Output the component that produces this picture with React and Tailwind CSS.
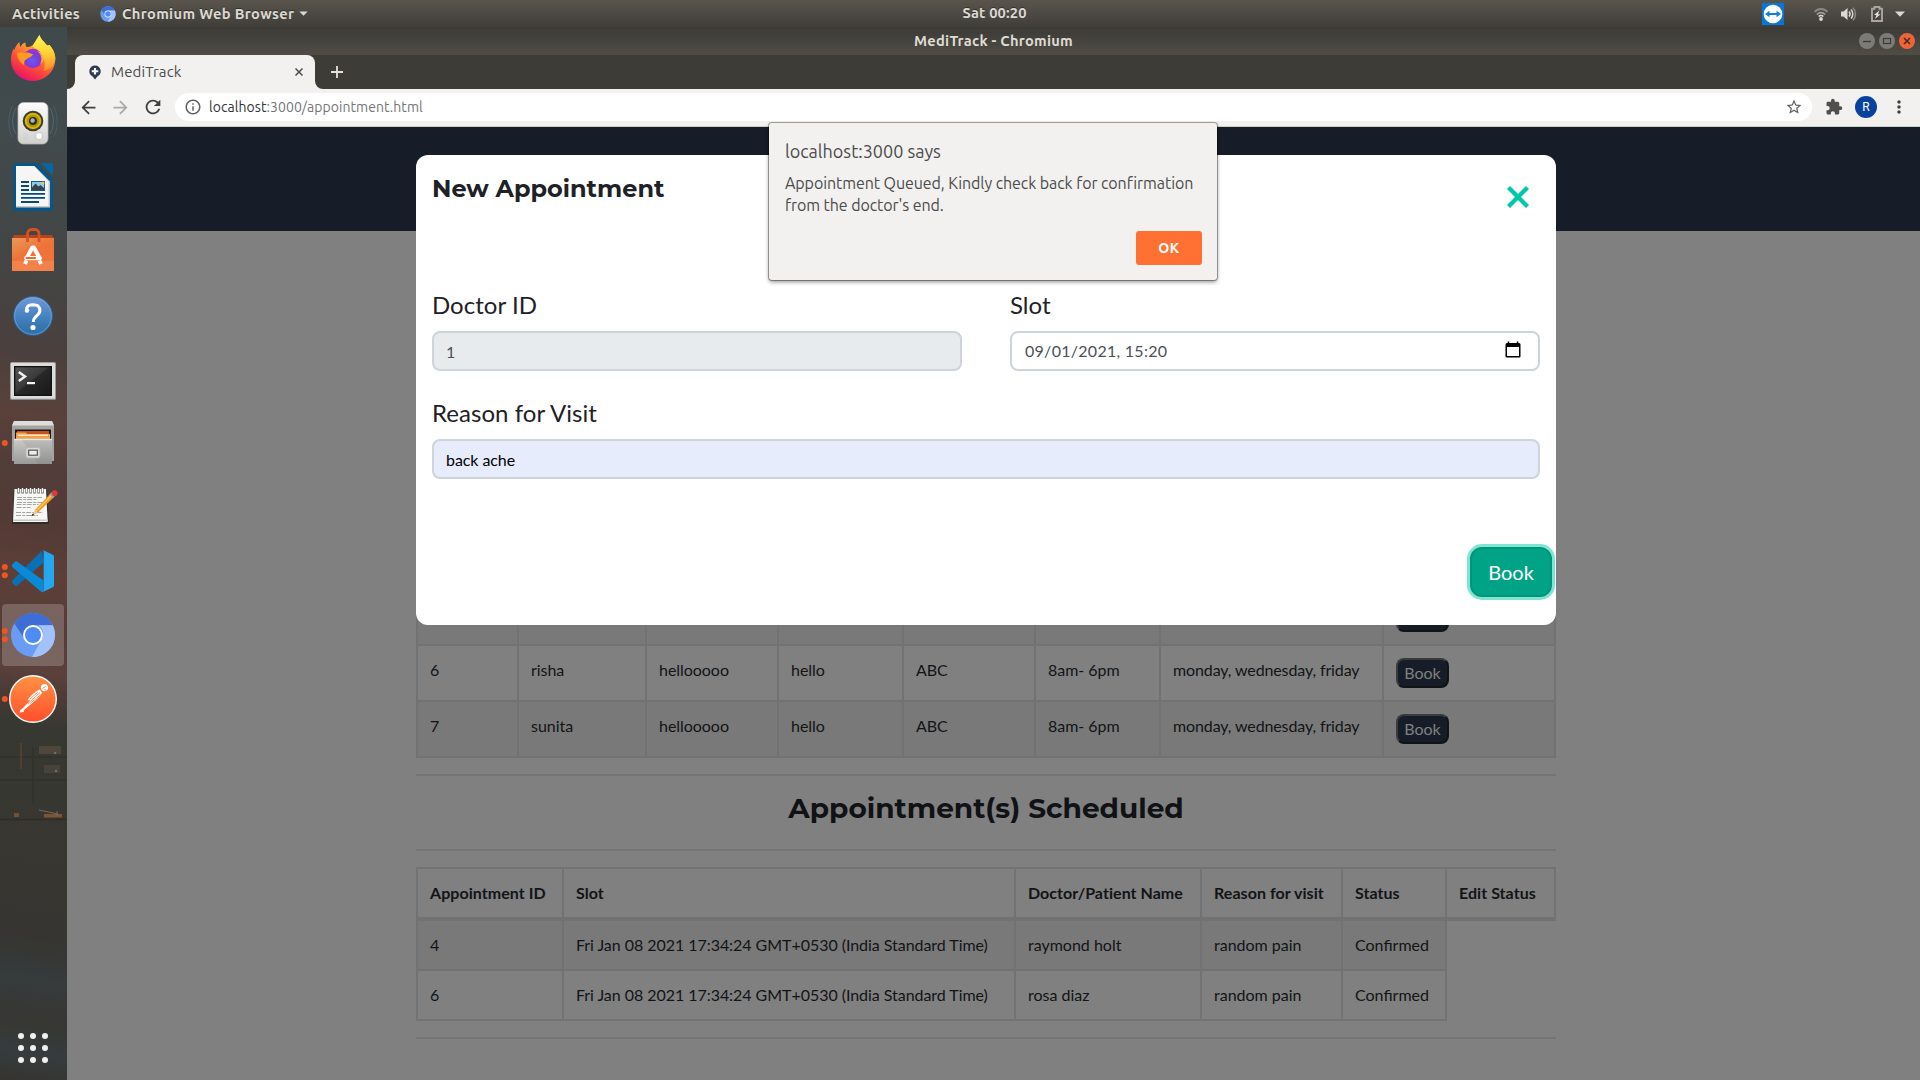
import {
  MdArrowBack,
  MdArrowForward,
  MdRefresh,
  MdInfoOutline,
  MdStarBorder,
  MdExtension,
  MdMoreVert,
} from "react-icons/md";

const UBUNTU = "font-['Ubuntu','Noto_Sans',sans-serif]";
const LATO = "font-['Lato','Noto_Sans',sans-serif]";
const MONTSERRAT = "font-['Montserrat','Noto_Sans',sans-serif]";

/* ---------- dock icons, each drawn in a 67x64 slot ---------- */

function Slot({ children, dots = 0, active = false }) {
  return (
    <div className="relative h-16 w-[67px] shrink-0">
      <svg viewBox="0 0 67 64" className="block h-16 w-[67px]">
        {active && <rect x="2" y="1" width="62" height="62" rx="4" fill="#fff" fillOpacity="0.2" />}
        {children}
        {dots === 1 && <circle cx="4.8" cy="32" r="3" fill="#ef5423" />}
        {dots === 2 && (
          <>
            <circle cx="4.8" cy="28" r="3" fill="#ef5423" />
            <circle cx="4.8" cy="36.3" r="3" fill="#ef5423" />
          </>
        )}
      </svg>
    </div>
  );
}

function Firefox() {
  return (
    <>
      <defs>
        <linearGradient id="ff1" x1="0.8" y1="0.05" x2="0.3" y2="1">
          <stop offset="0" stopColor="#ffe94a" />
          <stop offset="0.3" stopColor="#ffa42a" />
          <stop offset="0.6" stopColor="#ff5538" />
          <stop offset="0.85" stopColor="#f22a50" />
          <stop offset="1" stopColor="#e0107e" />
        </linearGradient>
        <linearGradient id="ff2" x1="0.5" y1="0" x2="0.6" y2="1">
          <stop offset="0" stopColor="#fff44f" />
          <stop offset="0.5" stopColor="#ffd335" />
          <stop offset="1" stopColor="#ff8a2c" />
        </linearGradient>
        <radialGradient id="ff3" cx="0.45" cy="0.6" r="0.7">
          <stop offset="0" stopColor="#6a5be8" />
          <stop offset="0.5" stopColor="#7a3ddc" />
          <stop offset="1" stopColor="#b02ad4" />
        </radialGradient>
      </defs>
      <path
        d="M19.5 15 C19.5 17 19.8 18.5 20.5 20 C21.5 17.5 23.5 15.5 25.7 15.7 C25.3 17 25.6 18.6 26.5 20 C30 20.5 33 18 35 16 C36 12.5 38 10 39.5 8 C40.8 12.5 44 14.5 47 18.5 L49.5 18 C53 22 55.5 27 55.3 32 C55 44.5 45 54 33 54 C20.5 54 11 44.5 11 32.5 C11 27.5 12.2 24.5 13.8 21.5 L14.5 23 C15 20 17 17 19.5 15 Z"
        fill="url(#ff1)"
      />
      <path
        d="M32.500 19.500 C34 15 38 12 39.5 8 C40.8 12.5 44 14.5 47 18.5 L49.5 18 C53 22 55.5 27 55.3 32 C54.5 38 50 43 43.5 44 C46 38 46 27 32.500 19.500 Z"
        fill="url(#ff2)"
      />
      <circle cx="33" cy="31.5" r="9.7" fill="url(#ff3)" />
      <path
        d="M17 26 C20 24.5 24 26.5 26 25.8 C28 25 30 26.5 33 27.2 C32 30 27.5 30.5 26.5 32.5 C24 33 24 36 24 38 C19 35 17 30 17 26 Z"
        fill="#ff9a1f"
      />
      <path d="M37 24 C42 27 42.5 33 40 37.5 C46 33 44.5 25.5 37 24 Z" fill="#ffb52b" />
    </>
  );
}

function Speaker() {
  return (
    <>
      <defs>
        <linearGradient id="sp1" x1="0" y1="0" x2="0" y2="1">
          <stop offset="0" stopColor="#fdfdfd" />
          <stop offset="1" stopColor="#cfcfcd" />
        </linearGradient>
      </defs>
      <g fill="none" stroke="#5d7d9c" strokeOpacity="0.6">
        <path d="M16 17 C11.5 25 11.5 36 16 43" />
        <path d="M50 17 C54.5 25 54.5 36 50 43" />
        <path d="M12.5 15 C7.5 25 7.5 37 12.5 46" strokeOpacity="0.35" />
        <path d="M53.5 15 C58.5 25 58.5 37 53.5 46" strokeOpacity="0.35" />
      </g>
      <rect x="18" y="11.5" width="30" height="41.5" rx="5.5" fill="url(#sp1)" stroke="#b5b5b2" strokeWidth="0.8" />
      <circle cx="33" cy="30" r="10.3" fill="#3b3a36" />
      <circle cx="33" cy="30" r="8.3" fill="#d9b800" />
      <circle cx="33" cy="30" r="6.3" fill="#b39700" />
      <circle cx="33" cy="30" r="4" fill="#2e2e2e" />
      <circle cx="32.6" cy="29.5" r="2.2" fill="#a9b3bd" />
      <path d="M36 42 h6 v5 a4 4 0 0 1 -6 0 z" fill="#fff" stroke="#bbb" strokeWidth="0.6" />
      <rect x="24" y="43" width="3.5" height="5" rx="1" fill="none" stroke="#c9c9c9" strokeWidth="0.6" />
    </>
  );
}

function Writer() {
  return (
    <>
      <path d="M15 8.3 H37 L53 24.5 V54 a2 2 0 0 1 -2 2 H15 a2 2 0 0 1 -2 -2 V10.3 a2 2 0 0 1 2 -2 Z" fill="#07568a" />
      <path d="M16 11 H34.5 L50 26.500 V52.5 H16 Z" fill="#c9c9c8" />
      <path d="M16 11 H34 L48.500 26.500 V51 H16 Z" fill="#f6f6f5" />
      <path d="M41 8.300 H51.500 a1.500 1.500 0 0 1 1.500 1.500 V20.500 Z" fill="#0468a8" />
      <g stroke="#0b4a77" strokeWidth="1.9">
        <path d="M21 27 h8 M21 31 h8 M21 35 h8 M21 38.9 h24 M21 42.9 h24 M21 47 h18" />
      </g>
      <rect x="31" y="26" width="14" height="10" fill="#0f5d92" />
      <rect x="32" y="27" width="12" height="8" fill="#8fcbf0" />
      <path d="M32 35 V32.500 L35.5 28.5 L38.5 31.5 L40.5 30 L44 33 V35 Z" fill="#3a4246" />
      <circle cx="43" cy="28" r="1.5" fill="#f1c84b" />
    </>
  );
}

function Software() {
  return (
    <>
      <defs>
        <linearGradient id="sw1" x1="0" y1="0" x2="0.6" y2="1">
          <stop offset="0" stopColor="#e89a5c" />
          <stop offset="0.5" stopColor="#ef7337" />
          <stop offset="1" stopColor="#f0743c" />
        </linearGradient>
      </defs>
      <path d="M12 20 L14 16 H52 L54 20 Z" fill="#b8431a" />
      <rect x="12" y="19" width="42" height="33" fill="url(#sw1)" />
      <rect x="12" y="42" width="42" height="10" fill="#f58b55" fillOpacity="0.6" />
      <path d="M27.5 23 V14.5 a4 4 0 0 1 4 -4 h3.5 a4 4 0 0 1 4 4 V23" fill="none" stroke="#d9501f" strokeWidth="2.8" />
      <path d="M27.300 38 L32.3 28.5 h1.6 L39 38" fill="none" stroke="#fff" strokeWidth="4" strokeLinejoin="round" />
      <path d="M25 45 l1.5 -3.500 M41 45 l-1.5 -3.500" stroke="#fff" strokeWidth="3.8" />
      <rect x="24" y="37" width="18" height="4.2" rx="2.1" fill="#fff" />
      <rect x="25.5" y="38.1" width="10.5" height="2" rx="0.8" fill="#ef6b2c" />
    </>
  );
}

function Help() {
  return (
    <>
      <defs>
        <linearGradient id="hp1" x1="0" y1="0" x2="0" y2="1">
          <stop offset="0" stopColor="#7099d6" />
          <stop offset="0.55" stopColor="#4380c0" />
          <stop offset="1" stopColor="#2d6c9f" />
        </linearGradient>
      </defs>
      <circle cx="33" cy="33" r="19.5" fill="url(#hp1)" stroke="#2b6192" strokeWidth="1" />
      <circle cx="33" cy="33" r="18.3" fill="none" stroke="#86abdc" strokeOpacity="0.7" strokeWidth="0.9" />
      <path
        d="M26.8 28.5 C25.5 22.5 30 21.7 33.5 21.7 C41 22 41 28.5 38 31.5 C35.5 34 33.3 35 33.3 39"
        fill="none"
        stroke="#fff"
        strokeWidth="3"
      />
      <circle cx="27" cy="27.5" r="2.2" fill="#fff" />
      <circle cx="33" cy="44.5" r="2.6" fill="#fff" />
    </>
  );
}

function Terminal() {
  return (
    <>
      <defs>
        <linearGradient id="tm1" x1="0" y1="0" x2="1" y2="1">
          <stop offset="0" stopColor="#555" />
          <stop offset="0.45" stopColor="#3a3a3a" />
          <stop offset="0.5" stopColor="#272727" />
          <stop offset="1" stopColor="#1a1a1a" />
        </linearGradient>
      </defs>
      <rect x="10" y="15" width="46" height="38" rx="1.5" fill="#8b8b89" />
      <rect x="10.8" y="15.8" width="44.4" height="36" rx="1" fill="#dcdcda" />
      <rect x="14" y="19" width="38" height="30" fill="#111" />
      <rect x="15.3" y="20.3" width="35.4" height="27.4" fill="url(#tm1)" />
      <path d="M18.8 25 L25 29.5 L18.8 34" fill="none" stroke="#f0f0ee" strokeWidth="2.5" />
      <rect x="27" y="35" width="8" height="2.2" fill="#f4f4f2" />
    </>
  );
}

function Files() {
  return (
    <>
      <defs>
        <linearGradient id="fl1" x1="0" y1="0" x2="0" y2="1">
          <stop offset="0" stopColor="#c9c9c8" />
          <stop offset="1" stopColor="#9a9a99" />
        </linearGradient>
      </defs>
      <path d="M14 10 H52 L54 15 V50 H12 V15 Z" fill="#a3a3a2" />
      <path d="M14 10 H52 L54 14.5 H12 Z" fill="#dededd" />
      <rect x="15" y="18.5" width="36" height="10" fill="#191919" />
      <path d="M17 20 h32 v8 h-32 z" fill="#c4501c" />
      <path d="M16 21.5 h10 l1 1.5 h23 v6 h-34 z" fill="#f0a24a" />
      <path d="M18 24.2 h30" stroke="#fff4e2" strokeWidth="1.2" />
      <path d="M14 28.5 H52 V53 H14 Z" fill="url(#fl1)" />
      <path d="M14 28.5 H52" stroke="#e6e6e6" strokeWidth="1.4" />
      <path d="M22 29 H52 V53 H38 Z" fill="#000" fillOpacity="0.06" />
      <rect x="26" y="36.5" width="14" height="10.5" rx="2" fill="#d8d8d7" stroke="#b5b5b4" strokeWidth="0.8" />
      <rect x="28.7" y="39.2" width="8.6" height="5" fill="#efefef" stroke="#555" strokeWidth="1.2" />
    </>
  );
}

const RINGS = [18.5, 22.5, 26.5, 30.5, 34.5, 38.5, 42.5];

function Notes() {
  return (
    <>
      <path d="M14 15 H47 L49 49 H12 Z" fill="#2f2b28" />
      <path d="M14.5 14 H46 L47.7 47 H13 Z" fill="#f7f7f5" />
      <path d="M13 45.3 H48" stroke="#c9cac2" strokeWidth="1.6" />
      <g stroke="#9b9b9b" strokeWidth="0.9" strokeDasharray="5 1.2 3 1">
        <path d="M17 22.5 h25 M17 24.5 h20 M17 27.5 h26 M16.5 29.5 h22 M16.5 32.5 h14 M16 37.5 h27 M16 40.5 h22" />
      </g>
      <g stroke="#6f6f6f" strokeWidth="2.6">
        {RINGS.map((x) => (
          <path key={x} d={`M${x} 13.5 v5`} />
        ))}
      </g>
      <g stroke="#fff" strokeWidth="1.2">
        {RINGS.map((x) => (
          <path key={x} d={`M${x} 13 v4.5`} />
        ))}
      </g>
      <path d="M35 35 L50.5 18.5 L54 22 L37.5 38 Z" fill="#f09c2b" />
      <path d="M36.2 36.2 L52 20" stroke="#ffc65c" strokeWidth="1.2" />
      <path d="M35 35 L37.5 38 L31.5 41 Z" fill="#e8c79a" />
      <path d="M33 38.5 L31 41.3 L34 40 Z" fill="#111" />
      <path d="M49.3 19.5 L52 17 L55.5 20.5 L53 23 Z" fill="#9fa3a6" />
      <circle cx="54.6" cy="18.2" r="2.9" fill="#e03a3c" />
    </>
  );
}

function Code() {
  return (
    <>
      <path d="M12.3 41.500 L42 11.5 L43.5 23.5 L17 46.7 Q16 47.3 15 46.5 L12.300 44 Q11.500 42.800 12.300 41.500 Z" fill="#0a70b5" />
      <path d="M12.3 25.5 L15 22.7 Q16 22 17.3 22.8 L43.5 41.5 V53 Q42 53.6 40.5 52.3 L12.3 28 Q11.5 26.8 12.3 25.5 Z" fill="#0a8ad6" />
      <path d="M42.8 11 L52.8 15.7 Q54 16.3 54 17.6 V46.5 Q54 47.7 52.8 48.3 L42.8 53 Q43.7 52.5 43.7 51 V13 Q43.7 11.5 42.8 11 Z" fill="#25a7f0" />
    </>
  );
}

function ChromiumMark() {
  return (
    <>
      <circle cx="33" cy="32" r="22" fill="#6a9cf5" />
      <path d="M14.3 20.5 A22 22 0 0 1 52.7 22.2 H33 A10 10 0 0 0 24 35 Z" fill="#3f6dd6" />
      <path d="M52.7 22.2 A22 22 0 0 1 32 54 L42 36 A10 10 0 0 0 38 22.2 Z" fill="#a3c2fa" />
      <circle cx="33" cy="32" r="10" fill="#fff" />
      <circle cx="33" cy="32" r="8" fill="#4f8bf5" />
    </>
  );
}

function Postman() {
  return (
    <>
      <defs>
        <linearGradient id="pm1" x1="0" y1="0" x2="0" y2="1">
          <stop offset="0" stopColor="#ff9144" />
          <stop offset="1" stopColor="#ff4f2b" />
        </linearGradient>
      </defs>
      <circle cx="33" cy="32" r="24" fill="#fff" />
      <circle cx="33" cy="32" r="22.6" fill="url(#pm1)" />
      <circle cx="44.5" cy="20.6" r="3.6" fill="#fff" />
      <path d="M42.5 21.5 l3 -2 M44.5 22 l3 3" stroke="#f9793c" strokeWidth="0.9" />
      <path d="M39.5 22.5 C35 24.5 30 29.5 27.5 33 L30 33.5 L24 40 L20 43.5 L19.5 45.5 L23.5 45 L24 43 L33 35.5 C37 32.5 41 28.5 42 25.5 Z" fill="#fff" />
      <path d="M40 25.5 L27.5 37 M41 27.5 L30 36.5 M37.5 25.5 L29.5 32.5" stroke="#fb7a40" strokeWidth="0.8" />
    </>
  );
}

function Dock() {
  return (
    <aside className="flex w-[67px] shrink-0 flex-col justify-between bg-[linear-gradient(190deg,#3f4a4d_0%,#414a4c_11%,#424748_18%,#454443_25%,#4a403e_31%,#5a413a_37%,#513d39_42%,#523a35_47%,#5d3f38_52%,#563c37_57%,#5b403b_61%,#473a35_64%,#383832_66%,#373731_72%,#383631_80%,#363531_86%,#363b3c_90%,#373733_94%,#363c3d_97%,#35342f_100%)]">
      <div className="flex flex-col">
        <Slot><Firefox /></Slot>
        <Slot><Speaker /></Slot>
        <Slot><Writer /></Slot>
        <Slot><Software /></Slot>
        <Slot><Help /></Slot>
        <Slot><Terminal /></Slot>
        <Slot dots={1}><Files /></Slot>
        <Slot><Notes /></Slot>
        <Slot dots={2}><Code /></Slot>
        <Slot dots={2} active><ChromiumMark /></Slot>
        <Slot dots={1}><Postman /></Slot>
      </div>
      <svg viewBox="0 0 67 60" className="mt-3 mb-auto h-[60px] w-[67px]" opacity="0.45">
        <path d="M0 14 H67 M0 37 H67 M33 4 V60" stroke="#2a2b27" strokeWidth="1.500" />
        <path d="M21 0 V26" stroke="#6d4b35" strokeWidth="2" />
        <rect x="39" y="3" width="22" height="8" fill="#6a5848" />
        <rect x="44" y="22" width="16" height="8" fill="#5c5046" />
        <circle cx="55" cy="10" r="1.200" fill="#b7b3a8" />
        <circle cx="56" cy="28" r="1.200" fill="#b7b3a8" />
      </svg>
      <svg viewBox="0 0 67 14" className="mb-[210px] h-3.5 w-[67px]" opacity="0.7">
        <path d="M0 10.500 H67" stroke="#2a2b27" strokeWidth="1.500" />
        <rect x="14" y="4" width="5" height="4" fill="#8a5b38" />
        <rect x="44" y="5" width="18" height="3.500" fill="#9a6233" />
        <path d="M39 1 L58 5 M57 2 V7" stroke="#8d7f70" strokeWidth="1" />
      </svg>
      <div className="grid w-fit grid-cols-3 gap-1.5 pb-[17px] pl-[18px]">
        {Array.from({ length: 9 }, (_, i) => (
          <span key={i} className="size-1.5 rounded-full bg-[#f0f0ee]" />
        ))}
      </div>
    </aside>
  );
}

/* ---------- desktop bars ---------- */

function TopBar() {
  return (
    <header className={`${UBUNTU} grid h-[27px] grid-cols-[1fr_auto_1fr] items-center bg-gradient-to-b from-[#59554c] to-[#403e39] text-[14.67px] leading-[27px] font-bold text-[#dcd9d3] [text-shadow:0_-1px_0_#00000066]`}>
      <div className="flex items-center pl-3 tracking-[0.28px]">
        <span>Activities</span>
        <svg viewBox="10 9 46 46" className="ml-5 size-[16px]">
          <ChromiumMark />
        </svg>
        <span className="ml-1.5 tracking-[0.35px]">Chromium Web Browser</span>
        <svg viewBox="0 0 10 6" className="ml-[5px] h-[5px] w-[9px]">
          <path d="M0 0.5 H10 L5 5.8 Z" fill="#dcd9d3" />
        </svg>
      </div>
      <span className="-mt-0.5 ml-[69px] tracking-[0.15px]">Sat 00:20</span>
      <div className="flex items-center justify-end pr-[15px]">
        <svg viewBox="0 0 22 22" className="size-[22px]">
          <rect width="22" height="22" fill="#0a77d8" />
          <circle cx="11" cy="11" r="9.3" fill="#fff" />
          <path d="M3 11 L7.5 7.8 V10 H14.5 V7.8 L19 11 L14.5 14.2 V12 H7.5 V14.2 Z" fill="#0f7fdd" />
        </svg>
        <svg viewBox="0 0 14 14" className="ml-[30px] h-3.5 w-3.5" fill="none">
          <path d="M0.6 5 C4 1 10 1 13.4 5" stroke="#8b8882" strokeWidth="1.8" />
          <path d="M2.8 7.5 C5 5 9 5 11.2 7.5" stroke="#9f9c96" strokeWidth="1.6" />
          <path d="M4.6 9.6 C6 8 8 8 9.4 9.6" stroke="#dcd9d3" strokeWidth="1.5" />
          <circle cx="7" cy="12" r="1.9" fill="#dcd9d3" />
        </svg>
        <svg viewBox="0 0 16 14" className="ml-[13px] h-3.5 w-4" fill="none">
          <path d="M0 4.5 H2.5 L6.5 1 V13 L2.5 9.5 H0 Z" fill="#dcd9d3" />
          <path d="M8 4.5 C9.3 6 9.3 8 8 9.5" stroke="#dcd9d3" strokeWidth="1.5" />
          <path d="M10 2.5 C12.4 5 12.4 9 10 11.5" stroke="#dcd9d3" strokeWidth="1.5" />
          <path d="M12 0.7 C15.3 4 15.3 10 12 13.3" stroke="#8b8882" strokeWidth="1.5" />
        </svg>
        <svg viewBox="0 0 12 16" className="ml-3.5 h-4 w-3">
          <path d="M3.5 1 H8.5 V2.8 H11 V15 H1 V2.8 H3.5 Z" fill="none" stroke="#a9a6a0" strokeWidth="1.9" />
          <path d="M8.5 4.3 L3 9 H5.5 L4 13 L9.5 8.2 H7 Z" fill="#e4e1db" />
        </svg>
        <svg viewBox="0 0 10 6" className="ml-3 h-[6px] w-2.5">
          <path d="M0 0.5 H10 L5 5.8 Z" fill="#dcd9d3" />
        </svg>
      </div>
    </header>
  );
}

function TitleBar() {
  return (
    <div className={`${UBUNTU} grid h-7 grid-cols-[1fr_auto_1fr] items-center bg-gradient-to-b from-[#3b3a36] to-[#504d46] text-[14.67px] leading-7 font-bold text-[#dfdbd2]`}>
      <span />
      <span className="tracking-[0.25px]">MediTrack - Chromium</span>
      <div className="flex justify-end gap-1 pr-[5px]">
        <svg viewBox="0 0 16 16" className="size-4">
          <circle cx="8" cy="8" r="8" fill="#7d7b75" />
          <path d="M4 8.5 h8" stroke="#3c3b37" strokeWidth="1.3" />
        </svg>
        <svg viewBox="0 0 16 16" className="size-4">
          <circle cx="8" cy="8" r="8" fill="#7d7b75" />
          <rect x="4.5" y="5.5" width="7" height="5" fill="none" stroke="#3c3b37" strokeWidth="1.2" />
        </svg>
        <svg viewBox="0 0 16 16" className="size-4">
          <circle cx="8" cy="8" r="8" fill="#ee6439" />
          <path d="M5 5 L11 11 M11 5 L5 11" stroke="#46281c" strokeWidth="1.5" />
        </svg>
      </div>
    </div>
  );
}

function TabStrip() {
  return (
    <div className={`${UBUNTU} flex h-[34px] items-stretch bg-[#3d3c36]`}>
      <svg viewBox="0 0 8 34" className="h-[34px] w-2">
        <path d="M0 34 A8 8 0 0 0 8 26 V34 Z" fill="#f2f1f0" />
      </svg>
      <div className="flex w-60 items-center rounded-t-lg bg-[#f2f1f0] pr-3 pl-[13px]">
        <svg viewBox="0 0 14 16" className="h-[15px] w-[14px]">
          <path d="M7 0.5 A6.2 6.2 0 0 1 9.5 12.3 L7 15.5 L4.5 12.3 A6.2 6.2 0 0 1 7 0.5 Z" fill="#2d3a54" />
          <path d="M7 3.2 V10.2 M3.5 6.7 H10.5" stroke="#fff" strokeWidth="2.3" />
        </svg>
        <span className="ml-[9px] text-[15px] leading-8 tracking-[0.1px] text-[#4c4c4c]">MediTrack</span>
        <svg viewBox="0 0 8 8" className="ml-auto size-2">
          <path d="M0.5 0.5 L7.5 7.5 M7.5 0.5 L0.5 7.5" stroke="#4a4a4a" strokeWidth="1.5" />
        </svg>
      </div>
      <svg viewBox="0 0 8 34" className="h-[34px] w-2">
        <path d="M8 34 A8 8 0 0 1 0 26 V34 Z" fill="#f2f1f0" />
      </svg>
      <svg viewBox="0 0 12 12" className="ml-2 size-3 self-center">
        <path d="M6 0 V12 M0 6 H12" stroke="#e6e1d9" strokeWidth="1.8" />
      </svg>
    </div>
  );
}

function Toolbar() {
  return (
    <div className={`${UBUNTU} flex h-[38px] items-center border-b border-[#c9cfcb] bg-[#f2f1f0] pb-px`}>
      <MdArrowBack className="ml-[11px] size-[21px] text-[#3f3f3f]" />
      <MdArrowForward className="ml-[11px] size-[21px] text-[#aaa9a8]" />
      <MdRefresh className="ml-[11px] size-[22px] text-[#3f3f3f]" />
      <div className="ml-[11px] flex h-7 flex-1 items-center rounded-full bg-white pr-[9px] pl-[9px]">
        <MdInfoOutline className="size-[18px] text-[#5f6062]" />
        <span className="ml-[7px] flex-1 text-[14px] leading-7 tracking-[0.06px] text-[#747577]">
          <span className="text-[#333436]">localhost</span>:3000/appointment.html
        </span>
        <MdStarBorder className="size-[18px] text-[#5f6062]" />
      </div>
      <MdExtension className="ml-[13px] size-[18px] text-[#4f4f4f]" />
      <div className="ml-3 flex size-[22px] items-center justify-center rounded-full bg-[#08429f] font-['Roboto',sans-serif] text-xs text-white">
        R
      </div>
      <MdMoreVert className="mr-[11px] ml-3 size-5 text-[#3f3f3f]" />
    </div>
  );
}

/* ---------- page tables ---------- */

const DOCTOR_COLS = [101, 128, 132, 125, 132, 125, 223, 174];
const DOCTORS = [
  ["", "", "", "", "", "", ""],
  ["6", "risha", "hellooooo", "hello", "ABC", "8am- 6pm", "monday, wednesday, friday"],
  ["7", "sunita", "hellooooo", "hello", "ABC", "8am- 6pm", "monday, wednesday, friday"],
];

function DoctorTable() {
  return (
    <table className="w-[1140px] table-fixed border-separate border-spacing-0 border-b-2 border-[#707274] leading-6">
      <colgroup>
        {DOCTOR_COLS.map((w, i) => (
          <col key={i} style={{ width: w }} />
        ))}
      </colgroup>
      <tbody>
        {DOCTORS.map((row, r) => (
          <tr key={r} className="h-14 odd:bg-[#797979]">
            {row.map((cell, c) => (
              <td key={c} className="border-t-2 border-l-2 border-[#707274] p-3 pr-0 align-top tracking-[-0.04px] whitespace-nowrap nth-7:tracking-[-0.12px]">
                {cell}
              </td>
            ))}
            <td className="border-x-2 border-t-2 border-[#707274] p-3 align-top">
              <button className="block h-[30px] w-[53px] rounded-lg border-2 border-t-[#3a3b3c] border-r-[#121314] border-b-[#121314] border-l-[#3a3b3c] bg-[#161d28] leading-[26px] text-[#808080]">
                Book
              </button>
            </td>
          </tr>
        ))}
      </tbody>
    </table>
  );
}

const APPOINTMENT_COLS = [146, 452, 186, 141, 104, 111];
const APPOINTMENT_HEAD = ["Appointment ID", "Slot", "Doctor/Patient Name", "Reason for visit", "Status", "Edit Status"];
const APPOINTMENTS = [
  ["4", "Fri Jan 08 2021 17:34:24 GMT+0530 (India Standard Time)", "raymond holt", "random pain", "Confirmed"],
  ["6", "Fri Jan 08 2021 17:34:24 GMT+0530 (India Standard Time)", "rosa diaz", "random pain", "Confirmed"],
];

function AppointmentTable() {
  return (
    <table className="mt-4 w-[1140px] table-fixed border-separate border-spacing-0 leading-6">
      <colgroup>
        {APPOINTMENT_COLS.map((w, i) => (
          <col key={i} style={{ width: w }} />
        ))}
      </colgroup>
      <thead>
        <tr className="h-[54px]">
          {APPOINTMENT_HEAD.map((h) => (
            <th
              key={h}
              className="border-t-2 border-b-4 border-l-2 border-[#707274] p-3 pr-0 text-left align-top font-bold tracking-[0.05px] whitespace-nowrap last:border-r-2"
            >
              {h}
            </th>
          ))}
        </tr>
      </thead>
      <tbody>
        {APPOINTMENTS.map((row, r) => (
          <tr key={r} className="group h-[50px]">
            {row.map((cell, c) => (
              <td
                key={c}
                className="border-b-2 border-l-2 border-[#707274] p-3 pr-0 align-top whitespace-nowrap group-odd:bg-[#797979] nth-2:tracking-[-0.045px]"
              >
                {cell}
              </td>
            ))}
            <td className="border-l-2 border-[#707274]" />
          </tr>
        ))}
      </tbody>
    </table>
  );
}

/* ---------- overlays ---------- */

function Field({ label, children, className = "" }) {
  return (
    <label className={`block ${className}`}>
      <span className="block text-2xl leading-9 tracking-[0.04px] text-[#1e2125]">{label}</span>
      {children}
    </label>
  );
}

function AppointmentModal() {
  return (
    <section className="absolute top-[28px] left-[349px] flex h-[470px] w-[1140px] flex-col rounded-xl bg-white px-4">
      <div className="flex h-[132px] items-start justify-between pt-[19px]">
        <h2 className={`${MONTSERRAT} text-2xl leading-[29px] font-bold text-[#1e2125]`}>New Appointment</h2>
        <svg viewBox="0 0 22 22" className="mt-3 mr-[11px] size-[22px]">
          <path d="M1.5 1.5 L20.5 20.5 M20.5 1.5 L1.5 20.5" stroke="#00c9a7" strokeWidth="4.3" />
        </svg>
      </div>
      <div className="grid grid-cols-2 gap-x-12 gap-y-6">
        <Field label="Doctor ID">
          <div className="mt-2 h-10 rounded-lg border-2 border-[#ced4da] bg-[#e8ebed] px-3 pt-[7px] leading-6 text-[#495057]">1</div>
        </Field>
        <Field label="Slot">
          <div className="mt-2 flex h-10 items-start justify-between rounded-lg border-2 border-[#ced4da] bg-white pt-1.5 pr-[17px] pl-[13px] leading-6 tracking-[0.28px] text-[#495057]">
            09/01/2021, 15:20
            <svg viewBox="0 0 16 18" className="mt-[2px] h-[18px] w-4">
              <path d="M2 2 H14 a1.5 1.5 0 0 1 1.5 1.5 V15.5 a1 1 0 0 1 -1 1 H1.5 a1 1 0 0 1 -1 -1 V3.5 A1.5 1.5 0 0 1 2 2 Z M2 6 V15 H14 V6 Z" fill="#000" fillRule="evenodd" />
              <path d="M3.5 0.5 V3 M12.5 0.5 V3" stroke="#000" strokeWidth="1.5" />
            </svg>
          </div>
        </Field>
        <Field label="Reason for Visit" className="col-span-2">
          <div className="mt-2 h-10 rounded-lg border-2 border-[#ced4da] bg-[#e6ecfc] px-3 pt-[7px] leading-6 tracking-[-0.08px] text-black">back ache</div>
        </Field>
      </div>
      <button className="mt-[68px] mr-[-12px] h-[50px] w-[82px] self-end rounded-xl border-2 border-[#00967b] bg-[#00a385] text-xl text-white shadow-[0_0_0_3px_#80e4d3]">
        Book
      </button>
    </section>
  );
}

function AlertDialog() {
  return (
    <div
      role="alertdialog"
      className={`${UBUNTU} absolute -top-1 left-[702px] flex h-[157px] w-[448px] flex-col rounded-[3px] bg-[#f2f1f0] px-4 pt-4 text-[#4c4c4c] shadow-[0_0_0_1px_#00000050,0_2px_4px_#00000070]`}
    >
      <p className="text-lg leading-6">localhost:3000 says</p>
      <p className="mt-[9px] text-base leading-[22px] tracking-[-0.08px]">
        Appointment Queued, Kindly check back for confirmation
        <br />
        from the doctor&apos;s end.
      </p>
      <button className="mt-[15px] mr-[-1px] h-[34px] w-[66px] self-end rounded-[3px] bg-[#ff7033] text-sm font-bold tracking-[0.5px] text-white">
        OK
      </button>
    </div>
  );
}

export default function App() {
  return (
    <div className="flex h-[1080px] w-[1920px] flex-col overflow-hidden bg-[#808080]">
      <TopBar />
      <div className="flex min-h-0 flex-1">
        <Dock />
        <div className="flex min-w-0 flex-1 flex-col">
          <TitleBar />
          <TabStrip />
          <Toolbar />
          <div className={`${LATO} relative flex-1 text-base`}>
            <div className="h-[104px] bg-[#161d28]" />
            <main className="mt-[357px] ml-[349px] w-[1140px] text-[#121416]">
              <DoctorTable />
              <hr className="mt-4 border-t-2 border-[#737374]" />
              <h2 className={`${MONTSERRAT} mt-[15px] text-center text-[28px] leading-[34px] font-bold text-[#101216]`}>
                Appointment(s) Scheduled
              </h2>
              <hr className="mt-6 border-t-2 border-[#737374]" />
              <AppointmentTable />
              <hr className="mt-4 border-t-2 border-[#737374]" />
            </main>
            <AppointmentModal />
            <AlertDialog />
          </div>
        </div>
      </div>
    </div>
  );
}
